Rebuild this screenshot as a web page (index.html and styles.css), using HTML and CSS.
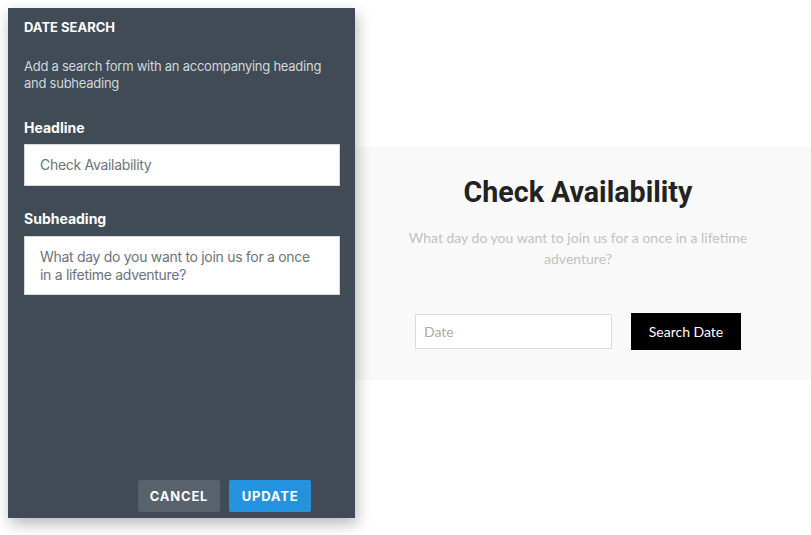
FILE: index.html
```html
<!DOCTYPE html>
<html>
<head>
<meta charset="utf-8">
<link rel="stylesheet" href="styles.css">
</head>
<body>
<main class="stage">
  <section class="preview">
    <h1 class="preview-title">Check Availability</h1>
    <p class="preview-sub">What day do you want to join us for a once in a lifetime adventure?</p>
    <form class="preview-form">
      <div class="date-input">Date</div>
      <div class="search-btn">Search Date</div>
    </form>
  </section>
</main>
<aside class="panel">
  <div class="panel-title">DATE SEARCH</div>
  <p class="panel-desc">Add a search form with an accompanying heading and subheading</p>
  <div class="field-label label-headline">Headline</div>
  <div class="field-input">Check Availability</div>
  <div class="field-label label-sub">Subheading</div>
  <div class="field-textarea">What day do you want to join us for a once in a lifetime adventure?</div>
  <div class="panel-actions">
    <div class="btn btn-cancel">CANCEL</div>
    <div class="btn btn-update">UPDATE</div>
  </div>
</aside>
</body>
</html>
```
FILE: styles.css
```css
html, body {
  margin: 0;
  padding: 0;
  background: #ffffff;
}
body {
  width: 811px;
  height: 535px;
  overflow: hidden;
  position: relative;
  font-family: Inter, "Liberation Sans", sans-serif;
}
.stage {
  padding-top: 147px;
  padding-left: 345px;
}
.preview {
  background: #f9f9f9;
  height: 233px;
  box-sizing: border-box;
  padding-top: 28px;
  display: flex;
  flex-direction: column;
  align-items: center;
}
.preview-title {
  margin: 0;
  font-family: Roboto, sans-serif;
  font-weight: 700;
  font-size: 28.6px;
  line-height: 34px;
  color: #222;
}
.preview-sub {
  margin: 18px 0 0;
  width: 360px;
  text-align: center;
  font-family: Lato, "Open Sans", sans-serif;
  font-size: 14px;
  line-height: 21px;
  color: #c2c2c2;
}
.preview-form {
  margin-top: 44px;
  display: flex;
  align-items: center;
  gap: 19px;
}
.date-input {
  width: 197px;
  height: 35px;
  box-sizing: border-box;
  background: #fff;
  border: 1px solid #dcdcdc;
  padding-left: 8px;
  font-family: Lato, sans-serif;
  font-size: 14px;
  line-height: 33px;
  color: #aaa;
}
.search-btn {
  width: 110px;
  height: 37px;
  background: #000;
  color: #fff;
  font-family: Lato, sans-serif;
  font-size: 14px;
  line-height: 37px;
  text-align: center;
}
.panel {
  position: absolute;
  left: 8px;
  top: 8px;
  width: 347px;
  height: 510px;
  box-sizing: border-box;
  background: #404b55;
  box-shadow: 2px 6px 14px rgba(0, 0, 0, 0.28);
  padding: 11px 15px 6px 16px;
  display: flex;
  flex-direction: column;
  color: #fff;
}
.panel-title {
  font-size: 13px;
  font-weight: 700;
  letter-spacing: 0;
  line-height: 16px;
}
.panel-desc {
  margin: 23px 0 0;
  font-size: 13px;
  line-height: 17px;
  letter-spacing: -0.25px;
  color: #d3d7db;
}
.field-label {
  font-size: 14px;
  font-weight: 700;
  line-height: 17px;
}
.label-headline { margin-top: 27px; }
.label-sub { margin-top: 24px; }
.field-input {
  margin-top: 8px;
  height: 42px;
  box-sizing: border-box;
  background: #fff;
  border: 1px solid #d6d9dc;
  padding-left: 15px;
  font-size: 14px;
  line-height: 40px;
  letter-spacing: -0.3px;
  color: #6b737a;
}
.field-textarea {
  margin-top: 9px;
  height: 59px;
  box-sizing: border-box;
  background: #fff;
  border: 1px solid #d6d9dc;
  padding: 11px 15px 0;
  font-size: 14px;
  line-height: 18px;
  letter-spacing: -0.3px;
  color: #6b737a;
}
.panel-actions {
  margin-top: auto;
  display: flex;
  justify-content: flex-end;
  gap: 9px;
  padding-right: 29px;
}
.btn {
  width: 82px;
  height: 32px;
  border-radius: 2px;
  font-size: 13px;
  font-weight: 700;
  letter-spacing: 0.8px;
  line-height: 32px;
  text-align: center;
  color: #fff;
}
.btn-cancel { background: #58626c; }
.btn-update { background: #2393e0; }
```
